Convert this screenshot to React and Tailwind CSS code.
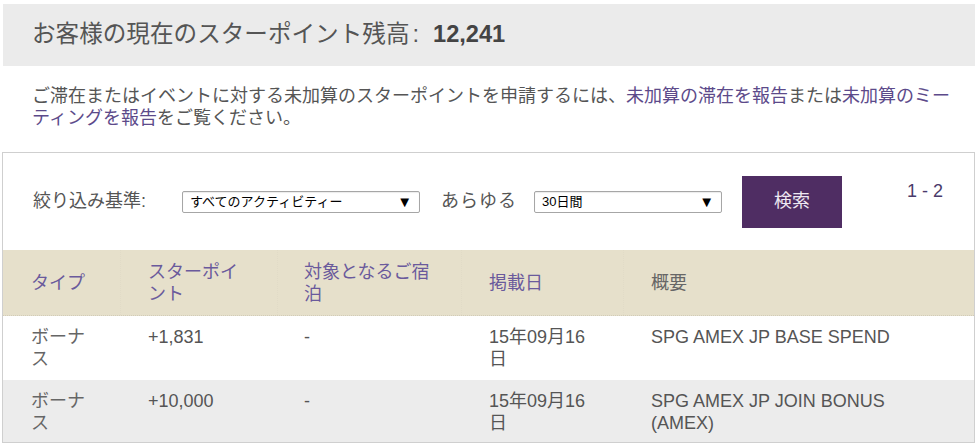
import React from "react";

const FONT = { fontFamily: '"Liberation Sans", "Noto Sans CJK JP", sans-serif' };

const columns = [
  { label: "タイプ", w: "w-[118px]", pl: "pl-[28px]", link: true },
  { label: "スターポイント", w: "w-[157px]", pl: "pl-[27px]", link: true },
  { label: "対象となるご宿泊", w: "w-[184px]", pl: "pl-[26px]", link: true },
  { label: "掲載日", w: "w-[162px]", pl: "pl-[27px]", link: true },
  { label: "概要", w: "flex-1", pl: "pl-[27px]", link: false },
];

const rows = [
  { type: "ボーナス", points: "+1,831", stay: "-", date: "15年09月16日", desc: "SPG AMEX JP BASE SPEND" },
  { type: "ボーナス", points: "+10,000", stay: "-", date: "15年09月16日", desc: "SPG AMEX JP JOIN BONUS (AMEX)" },
];

// fake select box, the native one draws differently
const SelectBox = ({ value, width }) => (
  <div
    className={`${width} h-[22px] flex items-center justify-between border border-[#a6a6a6] rounded-[2px] bg-white pl-[7px] pr-[7px] text-[13px] text-black shadow-[inset_0_1px_1px_rgba(0,0,0,0.08)]`}
  >
    <span>{value}</span>
    <span className="text-[15px] leading-none">▼</span>
  </div>
);

export default function App() {
  return (
    <div style={FONT} className="w-[978px] h-[447px] bg-white px-[2px] pt-[4px] overflow-hidden">
      {/* balance banner */}
      <div className="mx-[1px] h-[62px] bg-[#ebebeb] flex items-center pl-[29px] text-[23.6px] text-[#555]">
        <span>お客様の現在のスターポイント残高</span>
        <span className="ml-[3px] mr-[14px]">:</span>
        <span className="font-bold text-[#444]">12,241</span>
      </div>

      {/* info text */}
      <p className="pl-[30px] pt-[19px] pb-[23px] text-[18px] leading-[22px] text-[#555] whitespace-nowrap">
        ご滞在またはイベントに対する未加算のスターポイントを申請するには、
        <span className="text-[#5c4a8a]">未加算の滞在を報告</span>または
        <span className="text-[#5c4a8a]">未加算のミー</span>
        <br />
        <span className="text-[#5c4a8a]">ティングを報告</span>をご覧ください。
      </p>

      {/* activity table */}
      <div className="border border-[#cfcfcf] w-[973px]">
        <div className="h-[97px] flex items-center pl-[30px] pr-[31px] text-[18px] text-[#555]">
          <span>絞り込み基準:</span>
          <div className="ml-[36px]">
            <SelectBox value="すべてのアクティビティー" width="w-[238px]" />
          </div>
          <span className="ml-[21px] tracking-[1px]">あらゆる</span>
          <div className="ml-[17px]">
            <SelectBox value="30日間" width="w-[188px]" />
          </div>
          <button className="ml-[20px] w-[100px] h-[52px] bg-[#4f2d63] text-[#eee8f2] text-[18px]">
            検索
          </button>
          <span className="ml-auto self-start mt-[25px] text-[#4a3a6a]">1 - 2</span>
        </div>

        <div className="flex h-[66px] bg-[#e6e0cb] border-b border-dotted border-[#d2ccb8]">
          {columns.map((c) => (
            <div
              key={c.label}
              className={`${c.w} ${c.pl} pr-[28px] flex items-center text-[18px] leading-[22px] border-r border-dotted border-[#e1dbc7] last:border-r-0 ${
                c.link ? "text-[#6a5a9c]" : "text-[#666]"
              }`}
            >
              {c.label}
            </div>
          ))}
        </div>

        {rows.map((r, i) => (
          <div
            key={i}
            className={`flex text-[18px] leading-[22px] text-[#555] ${
              i % 2 === 1 ? "bg-[#ececec] h-[62px]" : "bg-white h-[64px]"
            }`}
          >
            <div className="w-[118px] pl-[28px] pr-[28px] pt-[10px] text-[#666]">{r.type}</div>
            <div className="w-[157px] pl-[27px] pr-[28px] pt-[10px]">{r.points}</div>
            <div className="w-[184px] pl-[26px] pr-[28px] pt-[10px]">{r.stay}</div>
            <div className="w-[162px] pl-[27px] pr-[28px] pt-[10px]">{r.date}</div>
            <div className="flex-1 pl-[27px] pr-[40px] pt-[10px]">{r.desc}</div>
          </div>
        ))}
      </div>
    </div>
  );
}
